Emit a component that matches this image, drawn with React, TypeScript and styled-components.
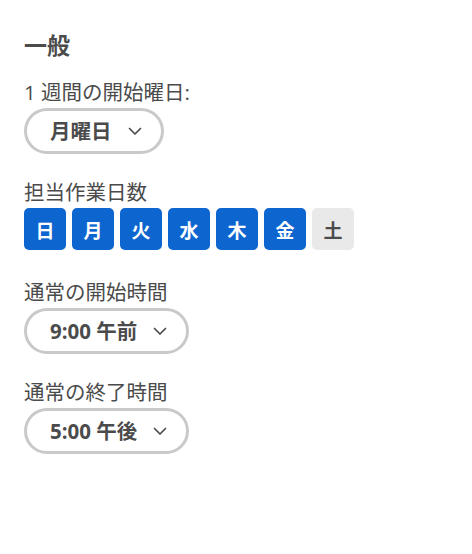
import React from "react";
import styled, { createGlobalStyle } from "styled-components";

const GlobalStyle = createGlobalStyle`
  body {
    margin: 0;
    background: #ffffff;
    font-family: "Open Sans", "Noto Sans CJK JP", sans-serif;
    color: #4b4b4b;
  }
`;

const days = [
  { label: "日", on: true },
  { label: "月", on: true },
  { label: "火", on: true },
  { label: "水", on: true },
  { label: "木", on: true },
  { label: "金", on: true },
  { label: "土", on: false },
];

function App() {
  return (
    <>
      <GlobalStyle />
      <Panel>
        <Heading>一般</Heading>
        <Field>
          <Label>1 週間の開始曜日:</Label>
          <Pill label="月曜日" />
        </Field>
        <Field>
          <Label>担当作業日数</Label>
          <DayRow>
            {days.map((d) => (
              <DayButton key={d.label} $on={d.on}>
                {d.label}
              </DayButton>
            ))}
          </DayRow>
        </Field>
        <Field>
          <Label>通常の開始時間</Label>
          <Pill label="9:00 午前" />
        </Field>
        <Field>
          <Label>通常の終了時間</Label>
          <Pill label="5:00 午後" />
        </Field>
      </Panel>
    </>
  );
}

export default App;

const Pill = ({ label }: { label: string }) => (
  <PillButton>
    <span>{label}</span>
    <Chevron viewBox="0 0 16 16">
      <path d="M2.5 5.5 L8 11 L13.5 5.5" fill="none" stroke="currentColor" strokeWidth="1.7" strokeLinecap="round" strokeLinejoin="round" />
    </Chevron>
  </PillButton>
);

const Panel = styled.div`
  display: flex;
  flex-direction: column;
  padding: 31px 24px;
`;

const Heading = styled.h2`
  margin: 0 0 21px;
  font-size: 23px;
  font-weight: 700;
  line-height: 28px;
`;

const Field = styled.div`
  display: flex;
  flex-direction: column;
  align-items: flex-start;
  gap: 4px;
  margin-bottom: 26px;
`;

const Label = styled.div`
  font-size: 20.5px;
  line-height: 24px;
`;

const PillButton = styled.button`
  display: flex;
  align-items: center;
  gap: 15px;
  height: 46px;
  padding: 0 18px 0 23px;
  border: 3px solid #c9c9c9;
  border-radius: 23px;
  background: #ffffff;
  color: #4b4b4b;
  font-family: "Open Sans", "Noto Sans CJK JP", sans-serif;
  font-size: 20.5px;
  font-weight: 700;
  line-height: 24px;
`;

const Chevron = styled.svg`
  width: 16px;
  height: 16px;
`;

const DayRow = styled.div`
  display: flex;
  gap: 6px;
  margin-bottom: 4px;
`;

const DayButton = styled.button<{ $on: boolean }>`
  width: 42px;
  height: 42px;
  padding: 0;
  border: none;
  border-radius: 5px;
  background: ${(p) => (p.$on ? "#0d66d0" : "#e9e9e9")};
  color: ${(p) => (p.$on ? "#ffffff" : "#4b4b4b")};
  font-family: "Noto Sans CJK JP", sans-serif;
  font-size: 19px;
  font-weight: 700;
`;
